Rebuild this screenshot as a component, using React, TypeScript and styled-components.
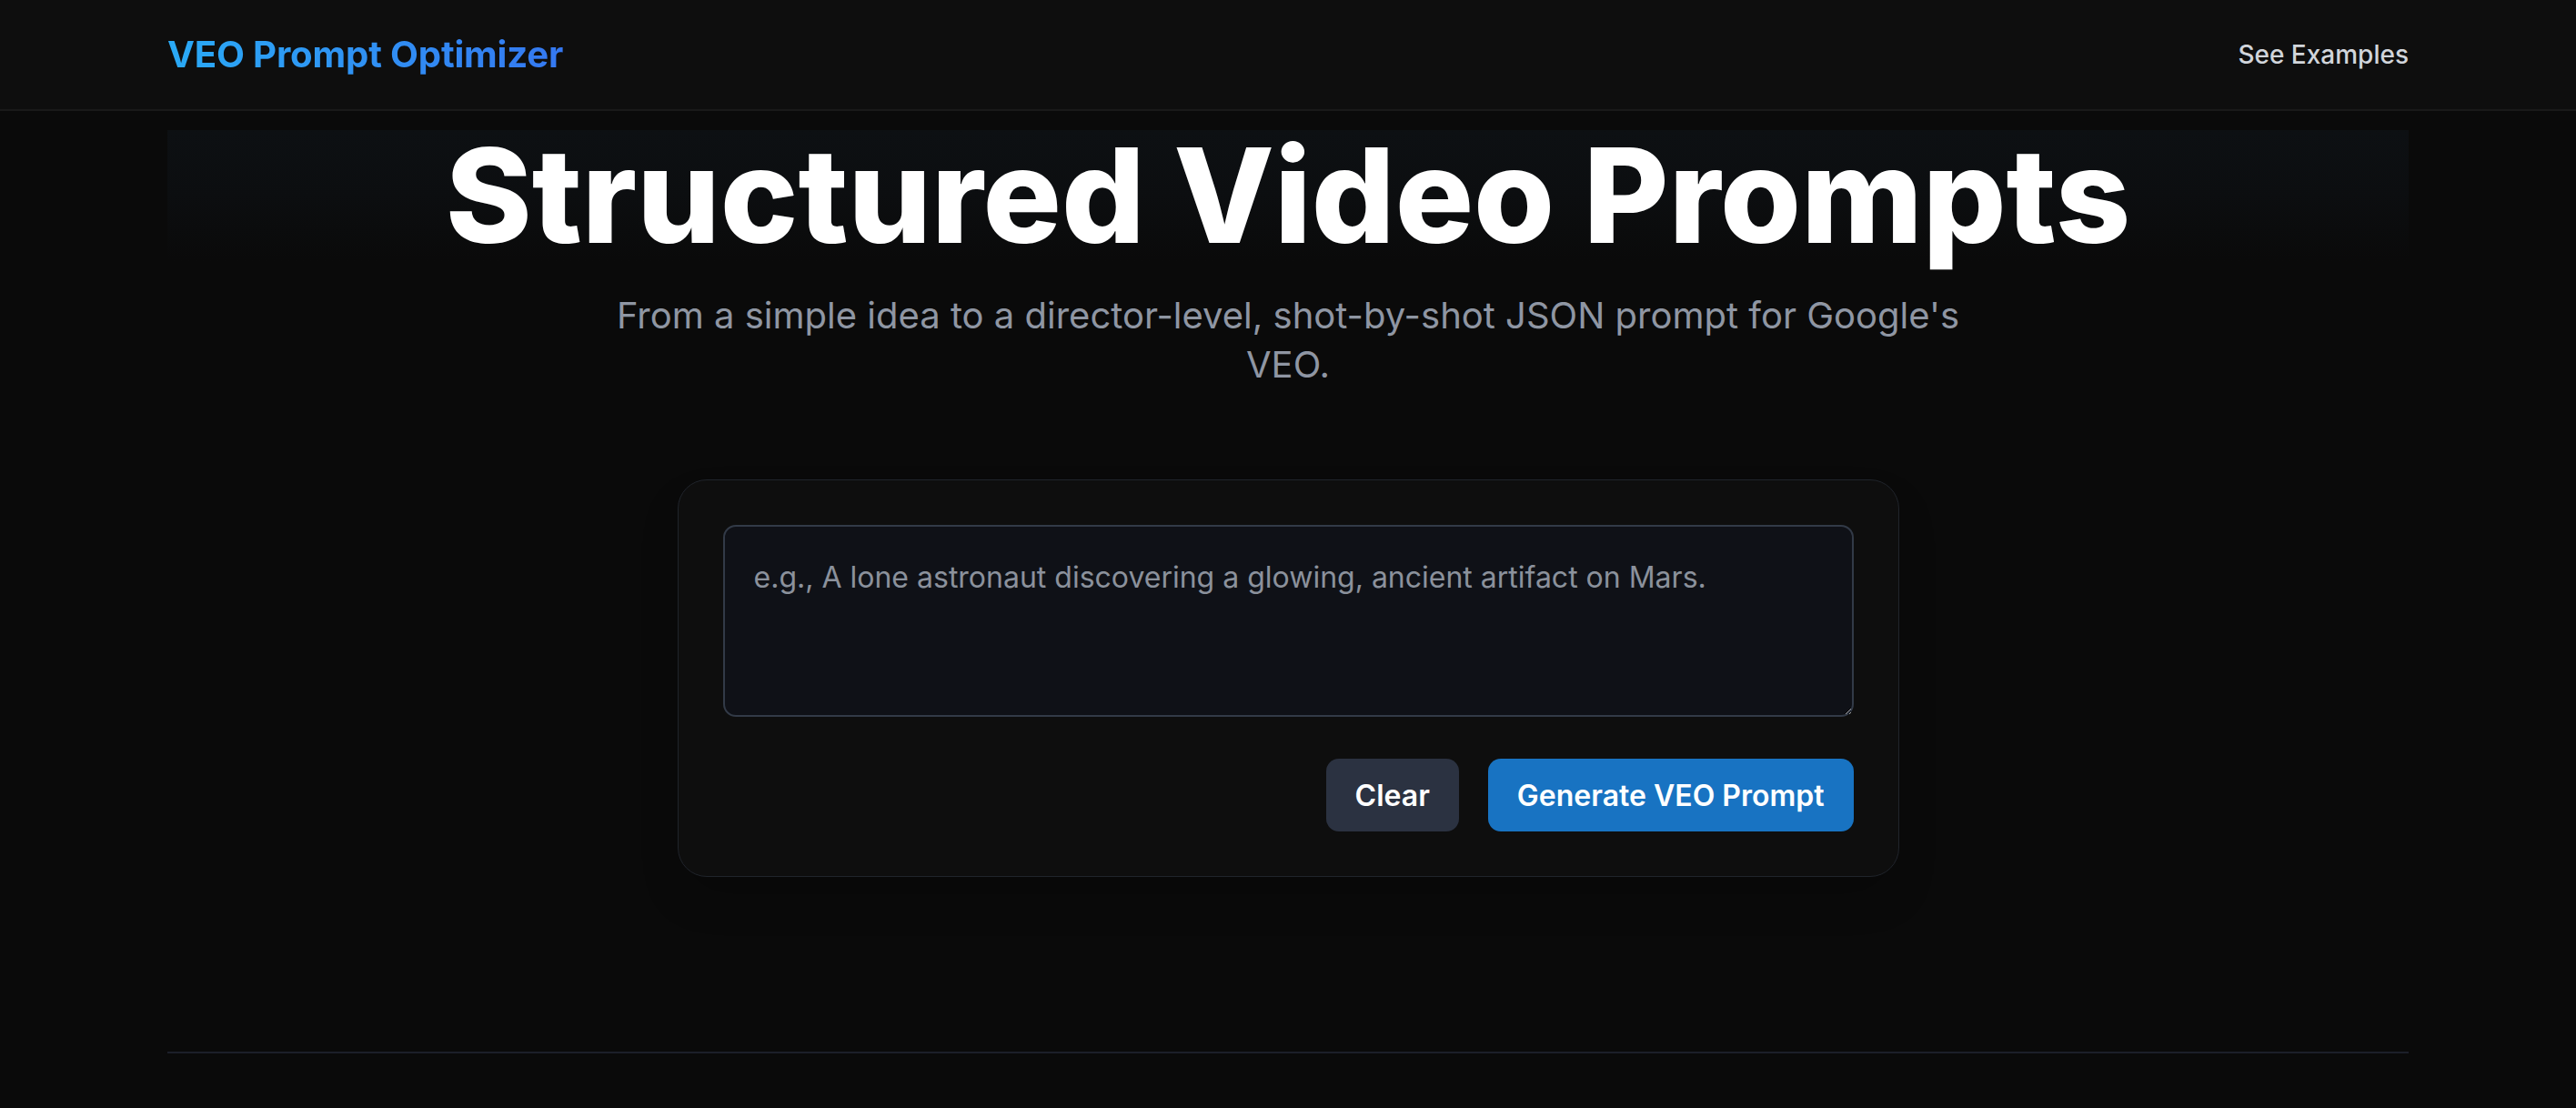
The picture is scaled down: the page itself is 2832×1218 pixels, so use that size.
import React, { useState } from "react";
import styled, { createGlobalStyle } from "styled-components";

const GlobalStyle = createGlobalStyle`
  * { box-sizing: border-box; }
  html, body {
    margin: 0;
    padding: 0;
    background: #0a0a0a;
    font-family: Inter, "Noto Sans", "Liberation Sans", sans-serif;
    color: #ffffff;
  }
`;

const Page = styled.div`
  min-height: 1218px;
  background: #0a0a0a;
`;

const Header = styled.header`
  background: #0e0e0e;
  border-bottom: 2px solid #191919;
`;

const Container = styled.div`
  width: 2464px;
  max-width: 100%;
  margin: 0 auto;
`;

const HeaderInner = styled(Container)`
  height: 120px;
  display: flex;
  align-items: center;
  justify-content: space-between;
`;

const Logo = styled.a`
  font-size: 40.2px;
  font-weight: 700;
  letter-spacing: -0.005em;
  background: linear-gradient(90deg, #2aaaf6 0%, #3578f1 100%);
  -webkit-background-clip: text;
  background-clip: text;
  color: transparent;
  text-decoration: none;
  line-height: 1.2;
`;

const NavLink = styled.a`
  font-size: 28px;
  font-weight: 500;
  color: #d1d5db;
  text-decoration: none;
`;

const Main = styled(Container)`
  padding-top: 21px;
  display: flex;
  flex-direction: column;
  align-items: center;
`;

const Title = styled.h1`
  align-self: stretch;
  margin: 0;
  font-size: 144px;
  line-height: 1;
  font-weight: 800;
  letter-spacing: 0;
  text-align: center;
  color: #ffffff;
  background: linear-gradient(180deg, #0d1013 0%, #0c0e10 50%, #0a0a0a 100%);
`;

const Subtitle = styled.p`
  max-width: 1520px;
  margin: 33px auto 0;
  font-size: 40px;
  line-height: 54px;
  font-weight: 400;
  color: #8f96a3;
  text-align: center;
`;

const Card = styled.section`
  width: 1343px;
  margin-top: 99px;
  padding: 49px;
  background: #0e0e0e;
  border: 1px solid #20242b;
  border-radius: 32px;
  box-shadow: 0 25px 50px -12px rgba(0, 0, 0, 0.25),
    0 0 40px rgba(255, 255, 255, 0.008);
  display: flex;
  flex-direction: column;
`;

const PromptInput = styled.textarea`
  width: 100%;
  height: 211px;
  background: #0f1117;
  border: 2px solid #323a47;
  border-radius: 14px;
  padding: 32px 32px;
  font-family: Inter, "Noto Sans", "Liberation Sans", sans-serif;
  font-size: 32px;
  line-height: 1.5;
  color: #e5e7eb;
  resize: vertical;
  outline: none;

  &::placeholder {
    color: #8b919c;
  }
`;

const ButtonRow = styled.div`
  margin-top: 46px;
  display: flex;
  justify-content: flex-end;
  gap: 32px;
`;

const Button = styled.button<{ $variant: "primary" | "secondary" }>`
  height: 80px;
  padding: 0 32px;
  border: none;
  border-radius: 14px;
  font-family: Inter, "Noto Sans", "Liberation Sans", sans-serif;
  font-size: 32px;
  font-weight: 600;
  color: #ffffff;
  cursor: pointer;
  background: ${(p) => (p.$variant === "primary" ? "#1873c2" : "#2b3241")};
`;

const Footer = styled(Container)`
  margin-top: 192px;
  border-top: 2px solid #1c1f29;
  height: 60px;
`;

export default function App() {
  const [value, setValue] = useState("");
  return (
    <Page>
      <GlobalStyle />
      <Header>
        <HeaderInner>
          <Logo href="#">VEO Prompt Optimizer</Logo>
          <NavLink href="#">See Examples</NavLink>
        </HeaderInner>
      </Header>
      <Main>
        <Title>Structured Video Prompts</Title>
        <Subtitle>
          From a simple idea to a director-level, shot-by-shot JSON prompt for
          Google's VEO.
        </Subtitle>
        <Card>
          <PromptInput
            value={value}
            onChange={(e) => setValue(e.target.value)}
            placeholder="e.g., A lone astronaut discovering a glowing, ancient artifact on Mars."
          />
          <ButtonRow>
            <Button $variant="secondary" onClick={() => setValue("")}>
              Clear
            </Button>
            <Button $variant="primary">Generate VEO Prompt</Button>
          </ButtonRow>
        </Card>
      </Main>
      <Footer />
    </Page>
  );
}
